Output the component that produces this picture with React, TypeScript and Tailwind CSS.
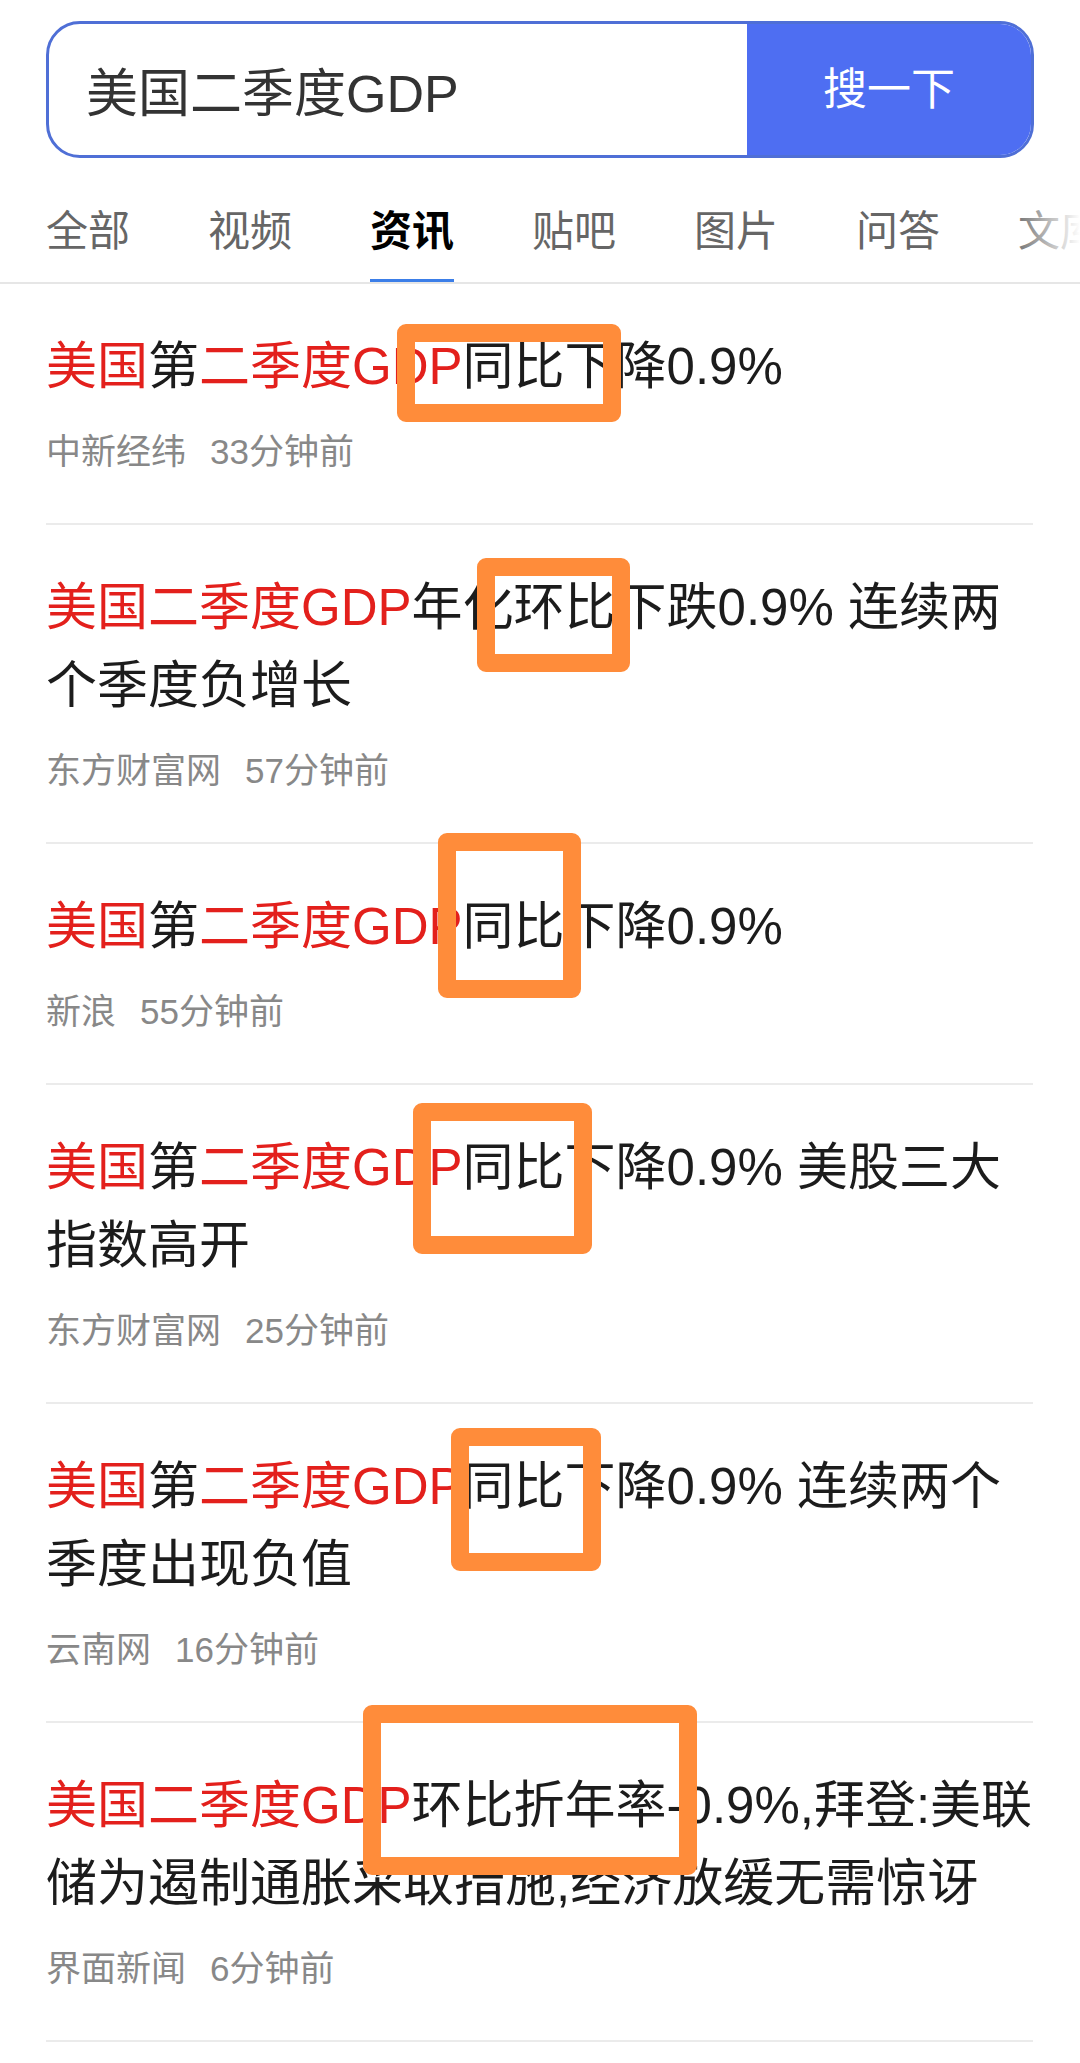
type Seg = [string, boolean?];
type NewsItem = { lines: Seg[][]; source: string; time: string };

const tabs = ["全部", "视频", "资讯", "贴吧", "图片", "问答", "文库"];

const news: NewsItem[] = [
  {
    lines: [[["美国", true], ["第"], ["二季度GDP", true], ["同比下降0.9%"]]],
    source: "中新经纬",
    time: "33分钟前",
  },
  {
    lines: [
      [["美国二季度GDP", true], ["年化环比下跌0.9% 连续两"]],
      [["个季度负增长"]],
    ],
    source: "东方财富网",
    time: "57分钟前",
  },
  {
    lines: [[["美国", true], ["第"], ["二季度GDP", true], ["同比下降0.9%"]]],
    source: "新浪",
    time: "55分钟前",
  },
  {
    lines: [
      [["美国", true], ["第"], ["二季度GDP", true], ["同比下降0.9% 美股三大"]],
      [["指数高开"]],
    ],
    source: "东方财富网",
    time: "25分钟前",
  },
  {
    lines: [
      [["美国", true], ["第"], ["二季度GDP", true], ["同比下降0.9% 连续两个"]],
      [["季度出现负值"]],
    ],
    source: "云南网",
    time: "16分钟前",
  },
  {
    lines: [
      [["美国二季度GDP", true], ["环比折年率-0.9%,拜登:美联"]],
      [["储为遏制通胀采取措施,经济放缓无需惊讶"]],
    ],
    source: "界面新闻",
    time: "6分钟前",
  },
];

// orange annotation boxes drawn over the screenshot
const marks = [
  "left-[397px] top-[324px] w-[224px] h-[98px]",
  "left-[477px] top-[558px] w-[153px] h-[114px]",
  "left-[438px] top-[833px] w-[143px] h-[165px]",
  "left-[413px] top-[1103px] w-[179px] h-[151px]",
  "left-[451px] top-[1428px] w-[150px] h-[143px]",
  "left-[363px] top-[1705px] w-[334px] h-[170px]",
];

const SearchBar = () => (
  <div className="px-[46px] pt-[21px]">
    <div className="flex h-[137px] rounded-[34px] border-[3px] border-[#4f6fd6] overflow-hidden">
      <div className="flex-1 flex items-center pl-[37px] pt-[9px] text-[52px] leading-none text-[#333]">
        美国二季度GDP
      </div>
      <div className="w-[284px] bg-[#4e6ef2] flex items-center justify-center text-[44px] leading-none text-white">
        搜一下
      </div>
    </div>
  </div>
);

const Tabs = () => (
  <div className="relative flex gap-[78px] px-[46px] border-b-2 border-[#e6e6e6] overflow-hidden whitespace-nowrap">
    {tabs.map((t) => (
      <div key={t} className="relative shrink-0 pt-[53px] pb-[29px]">
        <span
          className={
            t === "资讯"
              ? "text-[42px] leading-none font-bold text-black"
              : "text-[42px] leading-none text-[#666]"
          }
        >
          {t}
        </span>
        {t === "资讯" && (
          <div className="absolute left-0 right-0 -bottom-[3px] h-[6px] bg-[#3b7ee8]"></div>
        )}
      </div>
    ))}
    <div className="absolute right-0 top-0 bottom-0 w-[70px] bg-gradient-to-r from-white/0 to-white"></div>
  </div>
);

const NewsRow = ({ item }: { item: NewsItem }) => (
  <div className="border-b-2 border-[#ebebeb] pt-[44px] pb-[47px]">
    <div className="text-[51px] leading-[78px] text-[#1c1c1c]">
      {item.lines.map((line, i) => (
        <div key={i} className="whitespace-nowrap">
          {line.map(([txt, red], j) => (
            <span key={j} className={red ? "text-[#e3201c]" : ""}>
              {txt}
            </span>
          ))}
        </div>
      ))}
    </div>
    <div className="mt-[22px] flex text-[35px] leading-[48px] text-[#888]">
      <span>{item.source}</span>
      <span className="ml-[24px]">{item.time}</span>
    </div>
  </div>
);

export default function App() {
  return (
    <div
      className="relative w-[1080px] min-h-[2063px] bg-white"
      style={{ fontFamily: "'Liberation Sans', 'Noto Sans CJK SC', sans-serif" }}
    >
      <SearchBar />
      <Tabs />
      <div className="px-[46px] pr-[47px]">
        {news.map((n, i) => (
          <NewsRow key={i} item={n} />
        ))}
      </div>
      {marks.map((m, i) => (
        <div
          key={i}
          className={"absolute border-[18px] border-[#ff8c3a] rounded-[9px] " + m}
        ></div>
      ))}
    </div>
  );
}
